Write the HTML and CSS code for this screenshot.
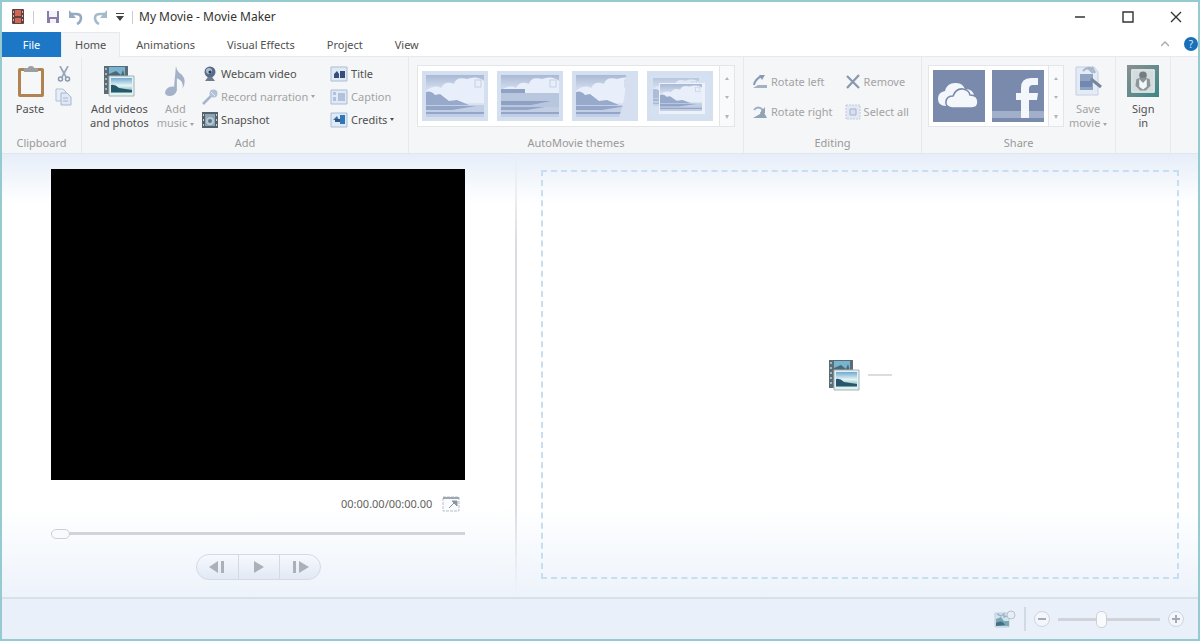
FILE: index.html
```html
<!DOCTYPE html>
<html lang="en">
<head>
<meta charset="utf-8">
<title>My Movie - Movie Maker</title>
<link rel="stylesheet" href="styles.css">
</head>
<body>
<svg class="defs" aria-hidden="true">
  <defs>
    <linearGradient id="sky" x2="0" y2="1"><stop offset="0" stop-color="#a9b9d5"/><stop offset=".5" stop-color="#e6edf8"/><stop offset="1" stop-color="#c5d1e6"/></linearGradient>
    <linearGradient id="sea" x2="0" y2="1"><stop offset="0" stop-color="#6fa9cf"/><stop offset=".5" stop-color="#e4f4f6"/><stop offset="1" stop-color="#5aa79f"/></linearGradient>
    <linearGradient id="teal" x2="1" y2="1"><stop offset="0" stop-color="#8b9091"/><stop offset="1" stop-color="#3c8787"/></linearGradient>
    <symbol id="scene" viewBox="0 0 58 42" preserveAspectRatio="none">
      <rect width="58" height="42" fill="url(#sky)"/>
      <path d="M0 16q8-7 15-3q4-8 13-4q2-8 13-5q10-4 17 2v22H0z" fill="#e9effa"/>
      <rect x="49" y="5" width="6" height="7" fill="none" stroke="#c4d0e3"/>
      <path d="M0 17q5-2 9 3l5-1 9 7 8-1 12 5 15 2v3H0z" fill="#98aacb"/>
      <path d="M0 30h58v12H0z" fill="#c2cee4"/><path d="M0 31h50l-24 4H0zM0 37h58v2H0z" fill="#93a5c8"/>
    </symbol>
    <symbol id="cloud" viewBox="0 0 52 52">
      <path d="M13 36q-8 0-8-7t7-8q2-8 10-8q7-1 10 6q9 0 9 8l-7 9z" fill="#f3f7fc"/>
      <path d="M19 38q-7-1-6-7q1-5 7-5q3-8 10-7q6 1 7 6q8 0 8 7q0 6-6 6z" fill="#f3f7fc" stroke="#7a8aac" stroke-width="1.6"/>
    </symbol>
    <symbol id="media" viewBox="0 0 32 32">
      <path d="M1 1h24v28H1z" fill="#5a6d76"/><path d="M6 2h16v10H6zM6 14h16v12H6z" fill="#78b4cf"/><path d="M6 9l7-3 5 4 2-5 2 7H6z" fill="#4b6874"/>
      <path d="M2 3h2v2H2zm0 5h2v2H2zm0 5h2v2H2zm0 5h2v2H2zm0 5h2v2H2z" fill="#a3b6bb"/>
      <path d="M6 11h25v20H6z" fill="#e6f0f2" stroke="#a2b3b8"/><path d="M8 13h21v15H8z" fill="url(#sea)"/><path d="M8 20q4-1 8 3l13 2v2H8z" fill="#28576b"/>
    </symbol>
    <symbol id="tile" viewBox="0 0 18 16"><path d="M1 1h16v14H1z" fill="#dfeaf6" stroke="#a9bed6"/></symbol>
  </defs>
</svg>

<div class="window">
  <header class="titlebar">
    <svg class="app-icon" viewBox="0 0 14 18"><rect x="1" y="1" width="12" height="15" rx="1" fill="#633f40"/><path d="M4 2h6v6H4zM4 10h6v5H4z" fill="#ce6856"/><path d="M2 3h1v2H2zm0 4h1v2H2zm0 4h1v2H2zm9-8h1v2h-1zm0 4h1v2h-1zm0 4h1v2h-1z" fill="#c8b9b7"/></svg>
    <span class="bar"></span>
    <button class="plain" aria-label="Save"><svg width="14" height="14" viewBox="0 0 14 14"><path d="M1 1h12v12H1z" fill="#8b7ca6"/><path d="M3 1h8v6H3zM4 9h6v4H4z" fill="#f5f3f9"/></svg></button>
    <button class="plain" aria-label="Undo"><svg width="16" height="16" viewBox="0 0 16 16"><path d="M3 5h5q5 0 5 4t-4 6" fill="none" stroke="#98a9c4" stroke-width="2.6"/><path d="M1 1v8h7z" fill="#98a9c4"/></svg></button>
    <button class="plain" aria-label="Redo"><svg width="16" height="16" viewBox="0 0 16 16"><path d="M13 5H8Q3 5 3 9t4 6" fill="none" stroke="#a6bacd" stroke-width="2.6"/><path d="M15 1v8H8z" fill="#a6bacd"/></svg></button>
    <button class="plain" aria-label="Customize toolbar"><svg width="8" height="8" viewBox="0 0 8 8"><path d="M0 0h8v1H0zM0 3h8L4 8z" fill="#444"/></svg></button>
    <span class="bar"></span>
    <h1>My Movie - Movie Maker</h1>
    <div class="window-buttons">
      <button class="plain" aria-label="Minimize"><svg width="12" height="12" viewBox="0 0 12 12"><path d="M1 6h10" stroke="#333" stroke-width="1.5"/></svg></button>
      <button class="plain" aria-label="Maximize"><svg width="12" height="12" viewBox="0 0 12 12"><path d="M1 1h10v10H1z" fill="none" stroke="#333" stroke-width="1.4"/></svg></button>
      <button class="plain" aria-label="Close"><svg width="12" height="12" viewBox="0 0 12 12"><path d="M1 1l10 10M11 1L1 11" stroke="#333" stroke-width="1.4"/></svg></button>
    </div>
  </header>

  <nav class="tabs">
    <button class="tab file">File</button>
    <button class="tab home">Home</button>
    <button class="tab">Animations</button>
    <button class="tab">Visual Effects</button>
    <button class="tab">Project</button>
    <button class="tab">View</button>
    <div class="tab-tools">
      <button class="plain" aria-label="Collapse ribbon"><svg width="8" height="6" viewBox="0 0 8 6"><path d="M0 5l4-4 4 4" fill="none" stroke="#aaa" stroke-width="1.4"/></svg></button>
      <button class="help" aria-label="Help">?</button>
    </div>
  </nav>

  <section class="ribbon">
    <div class="group">
      <div class="group-body clipboard">
        <button class="large"><svg width="32" height="32" viewBox="0 0 32 32"><rect x="4" y="3" width="26" height="29" rx="2" fill="#b08350"/><path d="M7 6h20v23H7z" fill="#f6f7f8"/><path d="M10 3h4q0-2 3-2t3 2h4v4H10z" fill="#9c9ea1"/></svg>Paste</button>
        <div class="clip-small">
          <button class="plain" aria-label="Cut"><svg width="14" height="16" viewBox="0 0 14 16"><path d="M3 0l6 11M11 0L5 11" stroke="#9aa6b8" stroke-width="1.7"/><circle cx="3.500" cy="13" r="2" fill="none" stroke="#8999b2" stroke-width="1.5"/><circle cx="10.500" cy="13" r="2" fill="none" stroke="#8999b2" stroke-width="1.5"/></svg></button>
          <button class="plain" aria-label="Copy"><svg width="17" height="18" viewBox="0 0 17 18"><path d="M1 1h7l3 3v9H1z" fill="#e8eef7" stroke="#b0bfd7"/><path d="M6 5h6l4 4v8H6z" fill="#dfe8f4" stroke="#a6b7d2"/><path d="M8 10h5M8 13h5" stroke="#a6b7d2"/></svg></button>
        </div>
      </div>
      <h2>Clipboard</h2>
    </div>

    <div class="group group-add">
      <div class="group-body add">
        <button class="large"><svg width="32" height="32"><use href="#media"/></svg>Add videos<br>and photos</button>
        <button class="large off"><svg width="32" height="34" viewBox="0 0 32 34"><path d="M17 1q1 6 6 9q6 6 1 15q2-8-6-11v13q-2 6-8 6q-6-1-4-6q3-5 9-4z" fill="#a3b2c8"/></svg>Add<br><span>music <i class="caret"></i></span></button>
        <div class="rows">
          <button class="small"><svg width="16" height="16" viewBox="0 0 16 16"><circle cx="8" cy="6" r="5.500" fill="#586b86"/><circle cx="7" cy="5" r="3" fill="#a9bdd4"/><circle cx="8" cy="6" r="1.500" fill="#26364d"/><path d="M6 11h4l3 4H3z" fill="#6e7c8e"/></svg>Webcam video</button>
          <button class="small off"><svg width="16" height="16" viewBox="0 0 16 16"><path d="M1 15L10 6" stroke="#a5b5ca" stroke-width="2.500"/><circle cx="11.500" cy="4.500" r="4" fill="#b1c1d8"/><path d="M9 3l4 4" stroke="#e5ecf5"/></svg>Record narration <i class="caret"></i></button>
          <button class="small"><svg width="16" height="16" viewBox="0 0 16 16"><path d="M0 0h16v16H0z" fill="#56626b"/><path d="M3 2h10v12H3z" fill="#8aa5b5"/><circle cx="8" cy="9" r="4" fill="#b8c8d0"/><circle cx="8" cy="9" r="2" fill="#5b7689"/><path d="M1 2h1v2H1zm0 5h1v2H1zm0 5h1v2H1zm13-10h1v2h-1zm0 5h1v2h-1zm0 5h1v2h-1z" fill="#ccd2d6"/></svg>Snapshot</button>
        </div>
        <div class="rows narrow">
          <button class="small"><svg width="18" height="16" viewBox="0 0 18 16"><use href="#tile"/><path d="M4 12V8l3-3 2 3v4zM10 12V5h5v7z" fill="#354f7a"/></svg>Title</button>
          <button class="small off"><svg width="18" height="16" viewBox="0 0 18 16"><use href="#tile"/><path d="M3 3h3v3H3zM3 8h3v4H3zM8 4h7v8H8z" fill="#b4c1db"/></svg>Caption</button>
          <button class="small"><svg width="18" height="16" viewBox="0 0 18 16"><use href="#tile"/><path d="M3 8l4-4 2 4zM10 3h5v9h-5z" fill="#3077b7"/><path d="M5 7h5v3H5z" fill="#315580"/></svg>Credits <i class="caret"></i></button>
        </div>
      </div>
      <h2>Add</h2>
    </div>

    <div class="group">
      <div class="group-body">
        <div class="gallery">
          <button class="theme" aria-label="Contemporary theme"><svg><use href="#scene"/></svg></button>
          <button class="theme" aria-label="Cinematic theme"><svg viewBox="0 0 58 42" preserveAspectRatio="none"><use href="#scene"/><path d="M0 18h58v14H0z" fill="#b9c7de"/><path d="M0 14h24v4H0z" fill="#8fa2c4"/><path d="M0 26h50l-20 4H0z" fill="#8ea1c3"/></svg></button>
          <button class="theme" aria-label="Fade theme"><svg viewBox="0 0 58 42" preserveAspectRatio="none"><use href="#scene"/><path d="M50 0h8v42H43q7-18 7-42z" fill="#d5dfef"/></svg></button>
          <button class="theme" aria-label="Pan and zoom theme"><svg viewBox="0 0 58 42" preserveAspectRatio="none"><path d="M0 0h58v42H0z" fill="#d5e0f0"/><use href="#scene" x="2" y="3" width="46" height="28" opacity=".65"/><path d="M8 8h46v31H8z" fill="#edf2fa"/><use href="#scene" x="9" y="9" width="42" height="27"/></svg></button>
          <div class="scroller"><button aria-label="Previous themes"><i class="up"></i></button><button aria-label="Next themes"><i class="caret"></i></button><button aria-label="All themes"><i class="caret more"></i></button></div>
        </div>
      </div>
      <h2>AutoMovie themes</h2>
    </div>

    <div class="group group-editing">
      <div class="group-body editing">
        <div>
          <button class="small off"><svg width="16" height="16" viewBox="0 0 16 16"><path d="M1 14h14v-3H6z" fill="#a4b0c3"/><path d="M2 11q1-6 8-9" fill="none" stroke="#8799b4" stroke-width="2"/><path d="M7 1h6l-3 5z" fill="#8799b4"/></svg>Rotate left</button>
          <button class="small off"><svg width="16" height="16" viewBox="0 0 16 16"><path d="M1 14h14L10 5 8 10z" fill="#8fa2b6"/><path d="M2 6q4-5 9 0" fill="none" stroke="#9eb0c3" stroke-width="2"/><path d="M13 3v6H8z" fill="#8fa2b6"/></svg>Rotate right</button>
        </div>
        <div>
          <button class="small off"><svg width="16" height="16" viewBox="0 0 16 16"><path d="M2 2l12 12M14 1L2 14" stroke="#8997af" stroke-width="2.200"/></svg>Remove</button>
          <button class="small off"><svg width="16" height="16" viewBox="0 0 16 16"><path d="M1 1h14v14H1z" fill="#e4e8f4" stroke="#c3cadf" stroke-dasharray="2 1"/><path d="M5 5h6v6H5z" fill="#d7deee" stroke="#a5b3ce"/></svg>Select all</button>
        </div>
      </div>
      <h2>Editing</h2>
    </div>

    <div class="group">
      <div class="group-body share">
        <div class="gallery">
          <button class="service" aria-label="OneDrive"><svg><use href="#cloud"/></svg></button>
          <button class="service" aria-label="Facebook"><svg viewBox="0 0 52 52"><path d="M0 41h52v7H0z" fill="#a1afca"/><path d="M29 48V30h-5v-7h5v-5q0-10 10-10h7v7h-5q-4 0-4 4v4h9l-1 7h-8v18z" fill="#f3f7fc"/></svg></button>
          <div class="scroller"><button aria-label="Previous services"><i class="up"></i></button><button aria-label="Next services"><i class="caret"></i></button><button aria-label="All services"><i class="caret more"></i></button></div>
        </div>
        <button class="large off"><svg width="32" height="32" viewBox="0 0 32 32"><path d="M4 2h18l4 5v23H4z" fill="#e4ebf5" stroke="#c4d0e3"/><path d="M8 9h13v16H8z" fill="#8fa3c4"/><path d="M8 16h12v6H8z" fill="#7288b1"/><path d="M11 6q6-7 12 1M16 3l5 5M20 2l3 6" stroke="#a7b6cd" stroke-width="2" fill="none"/><path d="M19 14l10 8" stroke="#788599" stroke-width="3"/></svg>Save<br><span>movie <i class="caret"></i></span></button>
      </div>
      <h2>Share</h2>
    </div>

    <div class="group">
      <div class="group-body sign">
        <button class="large"><svg width="34" height="34" viewBox="0 0 34 34"><path d="M0 0h34v34H0z" fill="url(#teal)"/><path d="M5 5h24v24H5z" fill="#d5dcde" stroke="#f1f4f4"/><circle cx="17" cy="11" r="4" fill="#747d82"/><path d="M10 15q7-3 14 0l1 7-5 5h-6l-5-5z" fill="#8c969a"/><path d="M13 15l4 4 4-4v8l-4 3-4-3z" fill="#f4f7f7"/></svg>Sign<br>in</button>
      </div>
    </div>
  </section>

  <main class="workspace">
    <section class="preview">
      <div class="video"></div>
      <div class="time"><span>00:00.00/00:00.00</span>
        <button class="plain" aria-label="Full screen"><svg width="18" height="16" viewBox="0 0 18 16"><path d="M1 1h16v14H1z" fill="#fafbfc" stroke="#b8bec8" stroke-dasharray="3 1"/><path d="M1 2h16" stroke="#9fa7b4" stroke-width="2"/><path d="M10 5h5v5zM7 12l6-6" fill="#8d95a0" stroke="#8d95a0"/></svg></button>
      </div>
      <input class="seek" type="range" min="0" max="100" value="0" aria-label="Playback position">
      <div class="playback">
        <button aria-label="Previous frame"><svg width="18" height="12" viewBox="0 0 18 12"><path d="M10 0v12L1 6zM13 0h3v12h-3z"/></svg></button>
        <button aria-label="Play"><svg width="18" height="12" viewBox="0 0 18 12"><path d="M4 0v12l10-6z"/></svg></button>
        <button aria-label="Next frame"><svg width="18" height="12" viewBox="0 0 18 12"><path d="M8 0v12l10-6zM2 0h3v12H2z"/></svg></button>
      </div>
    </section>
    <div class="divider"></div>
    <section class="storyboard">
      <button class="drop" aria-label="Add videos and photos"><svg width="32" height="32"><use href="#media"/></svg><span class="dash"></span></button>
    </section>
  </main>

  <footer class="status">
    <button class="plain" aria-label="Thumbnail size"><svg width="22" height="18" viewBox="0 0 22 18"><path d="M1 3h14v14H1z" fill="#d5e4ec" stroke="#bdcfdb"/><path d="M2 9l5-2 3 4h5v5H2z" fill="#79a9b6"/><path d="M2 13q6-4 9 2l-9 1z" fill="#446c84"/><path d="M3 4l4 2 3-2v3l3-1" fill="none" stroke="#9ab6ca" stroke-width="1.500"/><circle cx="17" cy="5" r="4" fill="#e7edf5" stroke="#b7c1ce"/></svg></button>
    <span class="status-bar"></span>
    <button class="zoom" aria-label="Zoom out"><svg width="8" height="8" viewBox="0 0 8 8"><path d="M0 4h8" stroke="#a4abb5" stroke-width="2"/></svg></button>
    <input class="zoom-range" type="range" min="0" max="100" value="42" aria-label="Zoom time scale">
    <button class="zoom" aria-label="Zoom in"><svg width="8" height="8" viewBox="0 0 8 8"><path d="M0 4h8M4 0v8" stroke="#a4abb5" stroke-width="2"/></svg></button>
  </footer>
</div>
</body>
</html>
```
FILE: styles.css
```css
* { box-sizing: border-box; }
body { margin: 0; font: 11px/14px "Noto Sans", "Open Sans", sans-serif; color: #505050; }
button { font: inherit; color: inherit; border: 0; background: none; padding: 0; }
svg { display: block; flex: none; }
h1, h2 { margin: 0; font-weight: 400; }
.defs { position: absolute; width: 0; height: 0; }

.window { min-height: 100vh; display: flex; flex-direction: column; border: 2px solid #94cad0; background: #fff; }

.titlebar { display: flex; align-items: center; height: 30px; padding-left: 9px; }
.app-icon { width: 14px; height: 18px; }
.bar { width: 1px; height: 13px; margin: 0 6px 0 8px; background: #ccc; }
.bar + .plain { margin-left: 6px; }
.titlebar > .plain { margin-right: 8px; }
.titlebar > h1 { font-size: 12px; color: #333; }
.titlebar > .plain + .bar { margin-left: 0; }
.window-buttons { display: flex; gap: 36px; margin-left: auto; padding-right: 16px; }

.tabs { display: flex; height: 25px; border-bottom: 1px solid #e6e9ed; }
.tab { padding: 0 16px; height: 25px; }
.file { min-width: 59px; background: #1c78c6; color: #fff; }
.home { padding: 0 13px; background: #f5f6f7; border: 1px solid #e6e9ed; border-bottom: 0; }
.tab-tools { display: flex; align-items: center; gap: 15px; margin-left: auto; }
.help { width: 14px; height: 14px; border-radius: 50%; background: #1b6fb8; color: #d9ebfa; font-size: 10px; line-height: 14px; }

.ribbon { display: flex; height: 97px; background: #f5f6f7; border-bottom: 1px solid #e1e6ee; }
.group { display: flex; flex-direction: column; border-right: 1px solid #e7e9ec; padding: 5px 0 2px; }
.group h2 { font-size: 11px; line-height: 16px; text-align: center; color: #999; }
.group-body { display: flex; flex: 1; padding: 0 8px; }
.group-add { min-width: 327px; }
.group-editing { min-width: 178px; }
.large { align-self: flex-start; padding-top: 3px; white-space: nowrap; text-align: center; }
.large svg { height: 32px; margin: 0 auto 5px; }
.off { color: #a3a3a3; }
.caret { display: inline-block; vertical-align: middle; border: 2px solid transparent; border-top: 3px solid currentColor; border-bottom: 0; }
.up { display: inline-block; border: 2px solid transparent; border-bottom: 3px solid currentColor; border-top: 0; }
.clipboard { padding: 0 9px 0 12px; gap: 9px; }
.clip-small { display: flex; flex-direction: column; align-items: center; gap: 6px; padding-top: 4px; }
.group-body.add { gap: 8px; padding: 0 0 0 8px; }
.rows { min-width: 120px; }
.rows.narrow { min-width: 74px; }
.small { display: flex; align-items: center; gap: 3px; height: 23px; white-space: nowrap; }
.gallery { display: flex; align-items: center; gap: 9px; height: 62px; margin-top: 3px; padding-left: 4px; background: #fff; border: 1px solid #e3e5e8; }
.theme { width: 66px; height: 50px; padding: 4px; background: #d4dff0; }
.theme svg { width: 100%; height: 100%; }
.scroller { display: flex; flex-direction: column; align-self: stretch; width: 15px; border-left: 1px solid #e3e5e8; background: #f9fafb; color: #b2b5ba; margin-left: -3px; }
.scroller button { flex: 1; line-height: 8px; }
.more { border-top-width: 4px; }
.editing { gap: 12px; padding-top: 5px; }
.editing .small { height: 30px; }
.service { width: 52px; height: 52px; background: #7a8aac; }
.service svg { width: 52px; height: 52px; }
.group-body.share { gap: 5px; padding: 0 8px 0 6px; }
.share .gallery { gap: 7px; }
.group-body.sign { padding: 0 10px; }

.workspace { flex: 1; display: grid; grid-template-columns: 43fr 2px 57fr; background: linear-gradient(#e6eef9 0, #fff 50px, #fff calc(100% - 90px), #edf3fb 100%); }
.preview { padding: 15px 50px 10px 49px; }
.video { aspect-ratio: 4 / 3; background: #000; }
.time { display: flex; justify-content: flex-end; align-items: center; gap: 10px; padding: 16px 5px 0 0; color: #626262; }
.seek { display: block; width: 100%; height: 14px; margin: 15px 0 0; }
input[type="range"] { appearance: none; background: none; }
input::-webkit-slider-runnable-track { height: 3px; background: #d2d3da; }
input::-webkit-slider-thumb { appearance: none; border: 1px solid #cdd1d7; background: #f8fafc; }
.seek::-webkit-slider-thumb { width: 19px; height: 10px; margin-top: -3px; border-radius: 5px; }
.playback { display: flex; width: max-content; margin: 13px auto 0; border: 1px solid #d3dae5; border-radius: 13px; overflow: hidden; background: linear-gradient(#f6f9fd, #e2e9f5); }
.playback button { display: grid; place-items: center; width: 41px; height: 24px; fill: #acb1b9; }
.playback button + button { border-left: 1px solid #d3dae5; }
.divider { background: linear-gradient(transparent, #d9dce1 20%, #d9dce1 80%, transparent); }
.storyboard { display: grid; padding: 16px 19px 18px 24px; }
.drop { display: flex; align-items: center; justify-content: center; gap: 8px; border: 2px dashed #c6def0; }
.dash { width: 24px; height: 2px; background: #dadcde; }

.status { display: flex; align-items: center; justify-content: flex-end; gap: 8px; height: 42px; padding-right: 14px; background: #e9f0fa; border-top: 2px solid #d8e0ea; }
.status-bar { width: 2px; height: 24px; background: #d1d9e3; }
.zoom { display: grid; place-items: center; width: 16px; height: 16px; border: 1px solid #ced5df; border-radius: 50%; background: #f3f6fb; }
.zoom-range { width: 102px; height: 18px; margin: 0; }
.zoom-range::-webkit-slider-thumb { width: 11px; height: 17px; margin-top: -7px; border-radius: 5px; }
```
